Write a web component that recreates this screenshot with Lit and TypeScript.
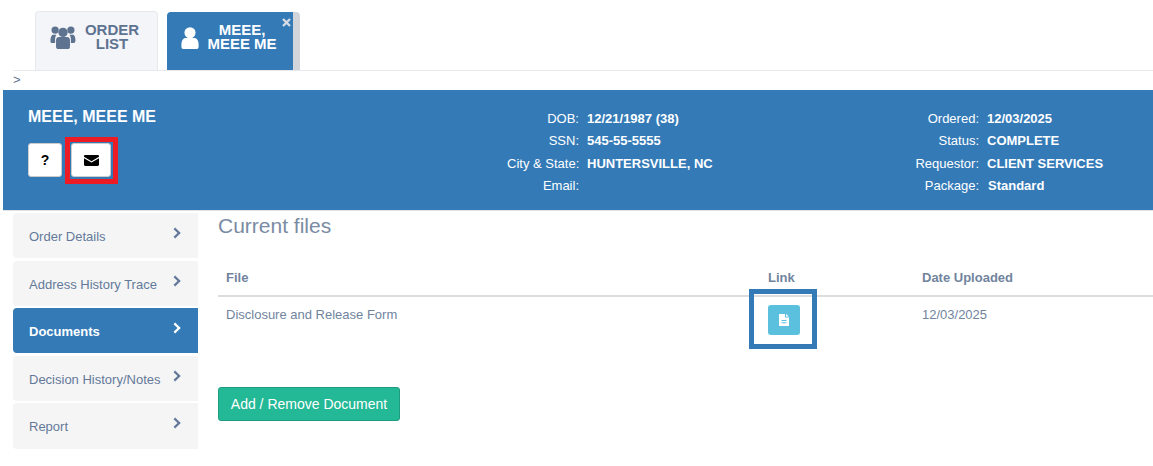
import { LitElement, html, css } from "lit";
import { customElement } from "lit/decorators.js";

const chevron = html`<svg class="chev" viewBox="0 0 10 14" width="9" height="12"><path d="M2.2 0.6 L8.8 7 L2.2 13.4 L0.4 11.5 L5 7 L0.4 2.5 Z" fill="currentColor"/></svg>`;

@customElement("app-root")
export class AppRoot extends LitElement {
  static styles = css`
    :host { display: block; width: 1153px; height: 466px; overflow: hidden; background: #fff; font-family: "Liberation Sans", Arial, sans-serif; color: #676a6c; font-size: 13px; }
    .tabs { display: flex; height: 70px; margin-left: 13px; padding: 11px 0 0 22px; box-sizing: border-box; gap: 9px; }
    .tab { box-sizing: border-box; height: 59px; border-radius: 4px 4px 0 0; display: flex; font-weight: bold; font-size: 15px; line-height: 14px; text-align: center; }
    .tab.list { width: 123px; background: #f4f5f9; border: 1px solid #e7eaec; border-bottom: 0; color: #5e7390; padding: 11px 0 0 14px; gap: 1px; }
    .tab.list svg { margin-top: 2px; }
    .tab.list .txt { width: 70px; }
    .tab.active { width: 133px; margin-top: 1px; height: 58px; background: #337ab7; border-right: 7px solid #d2d5d9; color: #fff; position: relative; padding: 11px 0 0 14px; gap: 5px; }
    .tab.active svg.user { margin-top: 4px; }
    .tab.active .txt { width: 76px; }
    .close { position: absolute; right: 2px; top: 6px; width: 9px; height: 9px; color: #d4dbe4; }
    .crumb { margin-left: 13px; border-top: 1px solid #e7eaec; height: 19px; font-size: 13px; line-height: 18px; color: #5e7390; }
    .banner { margin-left: 3px; height: 121px; background: #337ab7; color: #fff; display: grid; grid-template-columns: 504px 400px 1fr; box-sizing: border-box; border-bottom: 1px solid #dfe3e8; }
    .who { padding: 17px 0 0 25px; }
    .who h2 { margin: 0; font-size: 16px; line-height: 20px; font-weight: bold; }
    .btns { display: flex; gap: 9px; margin-top: 16px; }
    .sq { box-sizing: border-box; height: 34px; background: #fff; border: 1px solid #ccc; border-radius: 3px; display: flex; align-items: center; justify-content: center; color: #000; font-weight: bold; font-size: 14px; }
    .sq.q { width: 34px; }
    .sq.mail { width: 40px; position: relative; }
    .sq.mail::after { content: ""; position: absolute; left: -7px; top: -7px; width: 53px; height: 47px; box-sizing: border-box; border: 5px solid #ed1c24; }
    .info { display: grid; grid-template-columns: 72px 1fr; column-gap: 8px; padding-top: 18px; grid-auto-rows: 22.4px; line-height: 22.4px; font-size: 13px; white-space: nowrap; }
    .info .k { text-align: right; }
    .info .v { font-weight: bold; }
    .info .v.pkg { padding-left: 1px; }
    .main { display: flex; }
    .side { margin: 2px 0 0 13px; width: 185px; display: flex; flex-direction: column; gap: 2.5px; }
    .item { box-sizing: border-box; display: flex; height: 45px; background: #f5f5f5; border-radius: 4px 0 0 4px; color: #64799a; padding: 16px 16px 0 16px; line-height: 16px; justify-content: space-between; }
    .item:last-child { height: 46px; }
    .item span { font-size: 13px; }
    .item .chev { margin-top: -2px; }
    .item.on { background: #337ab7; color: #fff; font-weight: bold; }
    .content { flex: 1; padding-left: 20px; min-width: 0; }
    h1 { margin: 3px 0 0; font-size: 21px; line-height: 24px; font-weight: normal; color: #7a8ba3; }
    table { width: 100%; margin-top: 22px; border-collapse: collapse; color: #71849e; table-layout: fixed; }
    th { text-align: left; font-weight: bold; height: 36px; padding: 0 8px; border-bottom: 2px solid #ddd; font-size: 13px; box-sizing: border-box; }
    td { padding: 8px 8px 0; height: 52px; vertical-align: top; box-sizing: border-box; font-size: 13px; line-height: 20px; }
    .c1 { width: 542px; }
    .c2 { width: 154px; }
    .file { position: relative; width: 32px; height: 30px; background: #5bc0de; border-radius: 3px; display: flex; align-items: center; justify-content: center; }
    .file::after { content: ""; position: absolute; left: -19px; top: -16px; width: 68px; height: 60px; box-sizing: border-box; border: 5px solid #337ab7; }
    .add { display: inline-block; margin-top: 39px; box-sizing: border-box; width: 182px; height: 34px; background: #23b896; border: 1px solid #1c9d80; border-radius: 3px; color: #fff; font: 14px/32px "Liberation Sans", Arial, sans-serif; text-align: center; padding: 0; }
  `;

  render() {
    return html`
      <div class="tabs">
        <div class="tab list">
          <svg width="26" height="25" viewBox="0 0 28 26" fill="#5e7390"><circle cx="5.500" cy="5" r="3.900"/><circle cx="22.500" cy="5" r="3.900"/><circle cx="14" cy="7.500" r="5"/><path d="M0.500 17c0-5 1.500-7 3-7h3.500c-1 1.200-1.500 2.800-1.500 4.800v4.200H2c-1 0-1.500-.8-1.500-2zM27.500 17c0-5-1.500-7-3-7H21c1 1.200 1.500 2.800 1.500 4.800v4.200h3c1 0 1.500-.8 1.500-2z"/><path d="M6.500 16c0-2.500 1.500-3.500 3-3.500h9c1.500 0 3 1 3 3.500v7c0 1.500-1 2.500-2.500 2.500h-10C7.500 25.500 6.500 24.500 6.500 23z"/></svg>
          <div class="txt">ORDER<br />LIST</div>
        </div>
        <div class="tab active">
          <svg class="user" width="18" height="23" viewBox="0 0 18 24" fill="#fff"><circle cx="9" cy="6" r="5.800"/><path d="M0 19c0-5 2-7.500 4.500-7.500h9C16 11.500 18 14 18 19v1.500c0 1.500-1 2.500-2.500 2.500h-13C1 23 0 22 0 20.500z"/></svg>
          <div class="txt">MEEE,<br />MEEE ME</div>
          <svg class="close" viewBox="0 0 9 9"><path d="M1 1 L8 8 M8 1 L1 8" stroke="currentColor" stroke-width="2.400" /></svg>
        </div>
      </div>
      <div class="crumb">&gt;</div>
      <div class="banner">
        <div class="who">
          <h2>MEEE, MEEE ME</h2>
          <div class="btns">
            <div class="sq q">?</div>
            <div class="sq mail"><svg width="15" height="11" viewBox="0 0 14 11" preserveAspectRatio="none"><path d="M0 1.200C0 .5.500 0 1.200 0h11.600C13.500 0 14 .5 14 1.200v.6L7 6.200 0 1.800zM0 3.200l7 4.400 7-4.400v6.600c0 .7-.5 1.200-1.200 1.200H1.200C.5 11 0 10.500 0 9.800z" fill="#000"/></svg></div>
          </div>
        </div>
        <div class="info">
          <span class="k">DOB:</span><span class="v">12/21/1987 (38)</span>
          <span class="k">SSN:</span><span class="v">545-55-5555</span>
          <span class="k">City &amp; State:</span><span class="v">HUNTERSVILLE, NC</span>
          <span class="k">Email:</span><span class="v"></span>
        </div>
        <div class="info">
          <span class="k">Ordered:</span><span class="v">12/03/2025</span>
          <span class="k">Status:</span><span class="v">COMPLETE</span>
          <span class="k">Requestor:</span><span class="v">CLIENT SERVICES</span>
          <span class="k">Package:</span><span class="v pkg">Standard</span>
        </div>
      </div>
      <div class="main">
        <nav class="side">
          <div class="item"><span>Order Details</span>${chevron}</div>
          <div class="item"><span>Address History Trace</span>${chevron}</div>
          <div class="item on"><span>Documents</span>${chevron}</div>
          <div class="item"><span>Decision History/Notes</span>${chevron}</div>
          <div class="item"><span>Report</span>${chevron}</div>
        </nav>
        <div class="content">
          <h1>Current files</h1>
          <table>
            <thead><tr><th class="c1">File</th><th class="c2">Link</th><th>Date Uploaded</th></tr></thead>
            <tbody><tr>
              <td>Disclosure and Release Form</td>
              <td><div class="file"><svg width="10" height="12" viewBox="0 0 10 12"><path fill-rule="evenodd" d="M0 0h6v3.500h4V12H0zM7 0l3 2.600H7zM2.500 6h5v1h-5zM2.500 8.300h5v1h-5z" fill="#fff"/></svg></div></td>
              <td>12/03/2025</td>
            </tr></tbody>
          </table>
          <button class="add">Add / Remove Document</button>
        </div>
      </div>
    `;
  }
}
